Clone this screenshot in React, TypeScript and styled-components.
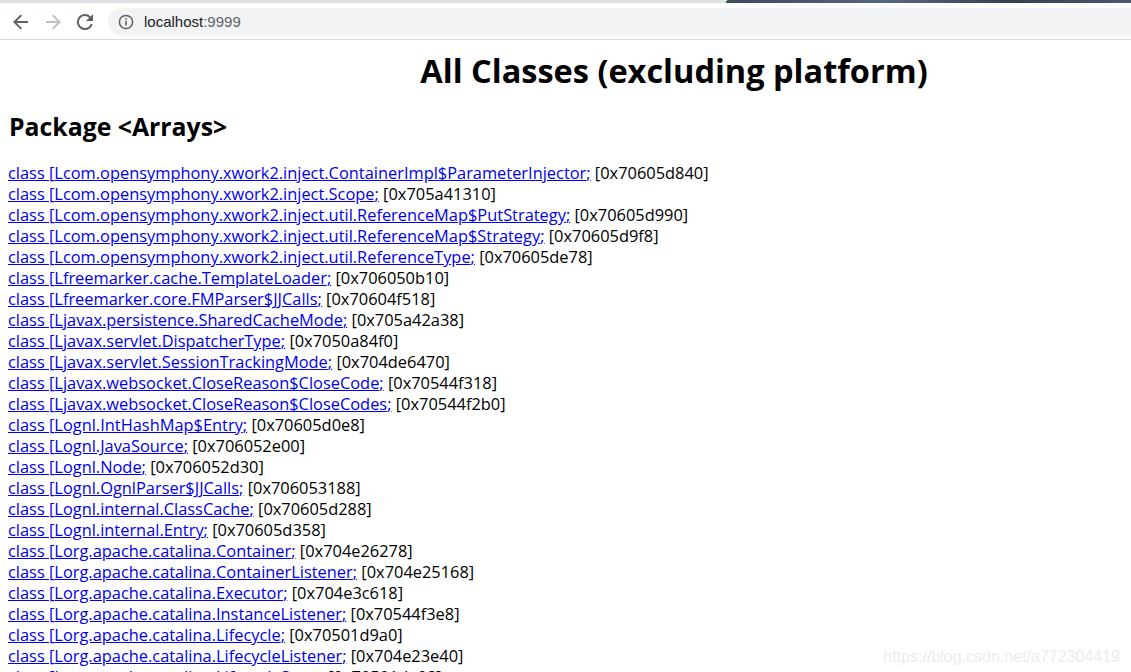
import * as React from "react";
import styled, { createGlobalStyle } from "styled-components";

const entries: [string, string][] = [
  ["Lcom.opensymphony.xwork2.inject.ContainerImpl$ParameterInjector", "0x70605d840"],
  ["Lcom.opensymphony.xwork2.inject.Scope", "0x705a41310"],
  ["Lcom.opensymphony.xwork2.inject.util.ReferenceMap$PutStrategy", "0x70605d990"],
  ["Lcom.opensymphony.xwork2.inject.util.ReferenceMap$Strategy", "0x70605d9f8"],
  ["Lcom.opensymphony.xwork2.inject.util.ReferenceType", "0x70605de78"],
  ["Lfreemarker.cache.TemplateLoader", "0x706050b10"],
  ["Lfreemarker.core.FMParser$JJCalls", "0x70604f518"],
  ["Ljavax.persistence.SharedCacheMode", "0x705a42a38"],
  ["Ljavax.servlet.DispatcherType", "0x7050a84f0"],
  ["Ljavax.servlet.SessionTrackingMode", "0x704de6470"],
  ["Ljavax.websocket.CloseReason$CloseCode", "0x70544f318"],
  ["Ljavax.websocket.CloseReason$CloseCodes", "0x70544f2b0"],
  ["Lognl.IntHashMap$Entry", "0x70605d0e8"],
  ["Lognl.JavaSource", "0x706052e00"],
  ["Lognl.Node", "0x706052d30"],
  ["Lognl.OgnlParser$JJCalls", "0x706053188"],
  ["Lognl.internal.ClassCache", "0x70605d288"],
  ["Lognl.internal.Entry", "0x70605d358"],
  ["Lorg.apache.catalina.Container", "0x704e26278"],
  ["Lorg.apache.catalina.ContainerListener", "0x704e25168"],
  ["Lorg.apache.catalina.Executor", "0x704e3c618"],
  ["Lorg.apache.catalina.InstanceListener", "0x70544f3e8"],
  ["Lorg.apache.catalina.Lifecycle", "0x70501d9a0"],
  ["Lorg.apache.catalina.LifecycleListener", "0x704e23e40"],
  ["Lorg.apache.catalina.LifecycleState", "0x70501da08"],
];

const App = () => {
  return (
    <Screen>
      <GlobalStyle />
      <TabStrip>
        <ActiveTabEdge />
      </TabStrip>
      <Toolbar>
        <NavButton>
          <svg width="16" height="16" viewBox="0 0 16 16">
            <path d="M15 7H3.8l5.2-5.2L7.6.4 0 8l7.6 7.6 1.4-1.4L3.8 9H15z" fill="currentColor" />
          </svg>
        </NavButton>
        <NavButton $disabled>
          <svg width="16" height="16" viewBox="0 0 16 16">
            <path d="M1 7h11.2L7 1.8 8.4.4 16 8l-7.6 7.6L7 14.2 12.2 9H1z" fill="currentColor" />
          </svg>
        </NavButton>
        <NavButton>
          <svg width="16" height="16" viewBox="0 0 16 16">
            <path
              d="M13.6 2.4A7.9 7.9 0 0 0 8 0a8 8 0 1 0 7.7 10h-2.1A6 6 0 1 1 8 2a5.9 5.9 0 0 1 4.2 1.8L9 7h7V0z"
              fill="currentColor"
            />
          </svg>
        </NavButton>
        <Omnibox>
          <svg width="16" height="16" viewBox="0 0 16 16">
            <circle cx="8" cy="8" r="6.6" fill="none" stroke="currentColor" strokeWidth="1.5" />
            <rect x="7.2" y="7" width="1.6" height="4.5" fill="currentColor" />
            <rect x="7.2" y="4.3" width="1.6" height="1.6" fill="currentColor" />
          </svg>
          <Url>
            localhost<Port>:9999</Port>
          </Url>
        </Omnibox>
      </Toolbar>
      <Page>
        <Title>All Classes (excluding platform)</Title>
        <PackageHeading>Package &lt;Arrays&gt;</PackageHeading>
        <ClassList>
          {entries.map(([name, addr]) => (
            <ClassRow key={name}>
              <ClassLink href="#">class [{name};</ClassLink> [{addr}]
            </ClassRow>
          ))}
        </ClassList>
      </Page>
      <Watermark>https://blog.csdn.net/a772304419</Watermark>
    </Screen>
  );
};

export default App;

const GlobalStyle = createGlobalStyle`
  html, body {
    margin: 0;
    padding: 0;
    background: #fff;
    overflow: hidden;
  }
`;

const Screen = styled.div`
  position: relative;
  width: 1131px;
  height: 672px;
  overflow: hidden;
  font-family: "Open Sans", "Liberation Sans", Arial, sans-serif;
`;

const TabStrip = styled.div`
  height: 3px;
  background: #dee1e6;
  display: flex;
  justify-content: flex-end;
`;

const ActiveTabEdge = styled.div`
  width: 405px;
  height: 3px;
  background: linear-gradient(90deg, #3c4a5c, #56687c 40%, #34414f 70%, #4a5a6b);
  border-top-left-radius: 3px;
`;

const Toolbar = styled.div`
  height: 36px;
  display: flex;
  align-items: center;
  padding-left: 5px;
  border-bottom: 1px solid #dadce0;
  background: #fff;
  font-family: "Liberation Sans", Arial, sans-serif;
`;

const NavButton = styled.div<{ $disabled?: boolean }>`
  width: 32px;
  height: 28px;
  display: flex;
  align-items: center;
  justify-content: center;
  color: ${(p) => (p.$disabled ? "#bdc1c6" : "#5f6368")};
  margin-top: 1px;
`;

const Omnibox = styled.div`
  flex: 1;
  height: 28px;
  margin-left: 7px;
  margin-top: 1px;
  border-radius: 14px 0 0 14px;
  background: #f1f3f4;
  display: flex;
  align-items: center;
  padding-left: 10px;
  color: #5f6368;
`;

const Url = styled.span`
  margin-left: 10px;
  font-size: 15px;
  color: #202124;
`;

const Port = styled.span`
  color: #5f6368;
`;

const Page = styled.div`
  width: 1332px;
  padding: 0 8px;
`;

const Title = styled.h1`
  margin: 7px 0 0;
  text-align: center;
  font-size: 32.5px;
  line-height: 48px;
  font-weight: bold;
  color: #000;
`;

const PackageHeading = styled.h2`
  margin: 17px 0 0 1px;
  font-size: 24.8px;
  line-height: 28px;
  font-weight: bold;
  color: #000;
`;

const ClassList = styled.div`
  margin-top: 22px;
  font-size: 16.4px;
  line-height: 21px;
  color: #000;
`;

const ClassRow = styled.div`
  white-space: nowrap;
`;

const ClassLink = styled.a`
  color: #0000ee;
  text-decoration: underline;
`;

const Watermark = styled.div`
  position: absolute;
  right: 11px;
  bottom: 6px;
  font-size: 16px;
  font-family: "Liberation Sans", Arial, sans-serif;
  color: #ececec;
`;
